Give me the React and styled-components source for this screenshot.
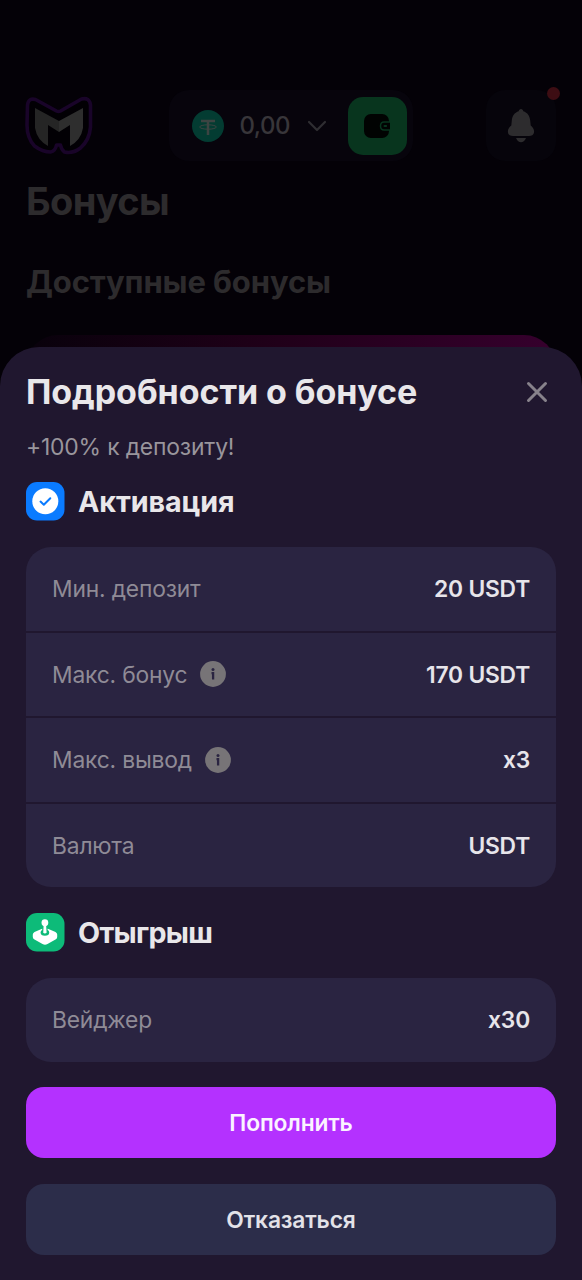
import React from 'react';
import styled, { createGlobalStyle } from 'styled-components';

const conditions = [
	{ label: 'Мин. депозит', value: '20 USDT' },
	{ label: 'Макс. бонус', value: '170 USDT', info: true },
	{ label: 'Макс. вывод', value: 'x3', info: true },
	{ label: 'Валюта', value: 'USDT' },
];

const wagering = [
	{ label: 'Вейджер', value: 'x30' },
];

const Logo = () => (
	<svg width="78" height="70" viewBox="0 0 78 70" fill="none">
		<path
			d="M7.500 14Q8.500 6.500 15.500 8.500L36.500 20Q38.500 21 40.500 20L61.500 8Q69.500 6 70.500 14L70.500 36Q69.500 49 60.500 57Q52.500 63 44.500 61Q41.500 59 40.500 54H36.500Q35.500 60 30.500 61Q22.500 61 14.500 55Q7 47 7 34Z"
			fill="#020004" stroke="#190429" strokeWidth="3.600" strokeLinejoin="round"
		/>
		<path d="M15 17L39 30V41L28 34V55Q17 49 15 37Z" fill="#252525" />
		<path d="M63 17L39 30V41L50 34V55Q61 49 63 37Z" fill="#2e2e2e" />
	</svg>
);

const Tether = () => (
	<svg width="32" height="32" viewBox="0 0 32 32" fill="none">
		<circle cx="16" cy="16" r="16" fill="#033c32" />
		<path d="M9 11H23M16 11V25" stroke="#3c4442" strokeWidth="2.500" />
		<ellipse cx="16" cy="17" rx="8.300" ry="2.200" stroke="#3c4442" strokeWidth="1" />
	</svg>
);

const Chevron = () => (
	<svg width="20" height="12" viewBox="0 0 20 12" fill="none">
		<path d="M2 2L10 10L18 2" stroke="#2f2e32" strokeWidth="2.200" strokeLinecap="round" strokeLinejoin="round" />
	</svg>
);

const Wallet = () => (
	<svg width="28" height="26" viewBox="0 0 28 26" fill="none">
		<rect x="1" y="1" width="25" height="24" rx="7" fill="#010302" />
		<path d="M27 9H21Q17.500 9 17.500 13T21 17H27Z" fill="#010302" />
		<path d="M27 9H21Q17.500 9 17.500 13T21 17H27" stroke="#08351e" strokeWidth="1.500" />
		<rect x="20.500" y="12" width="3.600" height="2" rx="1" fill="#08351e" />
	</svg>
);

const Bell = () => (
	<svg width="28" height="34" viewBox="0 0 28 34" fill="#2d2c2e">
		<path d="M14 0C15.300 0 16 1 16.300 2.200C20.500 3.600 22.900 7 23.200 11.500L23.700 16.500C26 18.500 27.500 20.500 27 23.500C26.700 26 24.500 27 22 27H6C3.500 27 1.300 26 1 23.500C.5 20.500 2 18.500 4.300 16.500L4.800 11.500C5.100 7 7.500 3.600 11.700 2.200C12 1 12.700 0 14 0Z" />
		<path d="M9 29H19Q17 33.300 14 33.300T9 29Z" />
	</svg>
);

const Cross = () => (
	<svg width="22" height="22" viewBox="0 0 22 22" fill="none">
		<path d="M2.500 2.500L19.500 19.500M19.500 2.500L2.500 19.500" stroke="#87828b" strokeWidth="3" strokeLinecap="round" />
	</svg>
);

const CheckBadge = () => (
	<svg width="39" height="39" viewBox="0 0 39 39" fill="none">
		<rect width="38.500" height="38.500" rx="11" fill="#0a7bff" />
		<circle cx="19.300" cy="19.300" r="13" fill="#fff" />
		<path d="M14.500 19.600L17.800 22.700L24.300 16.300" stroke="#0a7bff" strokeWidth="2" strokeLinecap="round" strokeLinejoin="round" />
	</svg>
);

const Joystick = () => (
	<svg width="39" height="39" viewBox="0 0 39 39" fill="none">
		<rect width="38.500" height="38.500" rx="11" fill="#0dbb79" />
		<path d="M8.500 19L15.500 16Q19 14.600 22.500 16L29.500 19Q31.200 20 31.200 21.500V24Q31.200 25.800 29.500 26.600L21.500 31Q19 32.300 16.500 31L8.500 26.600Q6.800 25.800 6.800 24V21.500Q6.800 20 8.500 19Z" fill="#fff" />
		<ellipse cx="18.900" cy="19.600" rx="4.300" ry="3.200" fill="#0dbb79" />
		<path d="M16.200 14H21.600V17H16.200Z" fill="#0dbb79" />
		<path d="M17.700 11H20.100L20.600 19.800Q18.900 21.200 17.200 19.800Z" fill="#fff" />
		<circle cx="18.900" cy="9.700" r="3.400" fill="#fff" />
	</svg>
);

const Info = () => (
	<svg width="26" height="26" viewBox="0 0 26 26" fill="none">
		<circle cx="13" cy="13" r="12.900" fill="#777477" />
		<circle cx="13" cy="8.500" r="1.500" fill="#2a2441" />
		<path d="M11.500 12.200H13.100V18.400" stroke="#2a2441" strokeWidth="2.300" />
	</svg>
);

const Details = ({ items }) => (
	<List>
		{items.map(item => (
			<Row key={item.label}>
				<Label>
					{item.label}
					{item.info && <Info />}
				</Label>
				<Value>{item.value}</Value>
			</Row>
		))}
	</List>
);

const App = () => {
	return (
		<Page>
			<GlobalStyle />
			<Backdrop>
				<TopBar>
					<Logo />
					<Balance>
						<Tether />
						<Amount>0,00</Amount>
						<Chevron />
						<WalletButton aria-label="Кошелёк"><Wallet /></WalletButton>
					</Balance>
					<BellButton aria-label="Уведомления">
						<Bell />
						<Dot />
					</BellButton>
				</TopBar>
				<PageTitle>Бонусы</PageTitle>
				<PageSubtitle>Доступные бонусы</PageSubtitle>
				<PromoCard />
			</Backdrop>

			<Sheet>
				<SheetHeader>
					<SheetTitle>Подробности о бонусе</SheetTitle>
					<CloseButton aria-label="Закрыть"><Cross /></CloseButton>
				</SheetHeader>
				<Lead>+100% к депозиту!</Lead>

				<SectionTitle><CheckBadge />Активация</SectionTitle>
				<Details items={conditions} />

				<SectionTitle $tight><Joystick />Отыгрыш</SectionTitle>
				<Details items={wagering} />

				<Actions>
					<Button $primary>Пополнить</Button>
					<Button>Отказаться</Button>
				</Actions>
			</Sheet>
		</Page>
	);
}

export default App;


const GlobalStyle = createGlobalStyle`
	* {
		box-sizing: border-box;
	}

	body {
		margin: 0;
		background: #040107;
		font-family: Inter, "Liberation Sans", sans-serif;
	}

	h1, h2, h3, p {
		margin: 0;
	}

	button {
		border: 0;
		padding: 0;
		background: none;
		font: inherit;
	}

	svg {
		display: block;
		flex: none;
	}
`

const Page = styled.div`
	display: flex;
	flex-direction: column;
	height: 1280px;
	overflow: hidden;
`

const Backdrop = styled.div`
	height: 375px;
	flex: none;
	padding: 90px 26px 0;
`

const TopBar = styled.header`
	display: flex;
	align-items: center;
	justify-content: space-between;
	height: 71px;
	margin-left: -6px;
`

const Balance = styled.div`
	display: flex;
	align-items: center;
	width: 244px;
	height: 71px;
	margin-left: -3px;
	padding: 0 6px 0 23px;
	border-radius: 20px;
	background: #07040c;
`

const Amount = styled.span`
	width: 66px;
	margin-left: 16px;
	margin-right: 1px;
	font-size: 24px;
	font-weight: 500;
	letter-spacing: -0.5px;
	color: #38363a;
`

const WalletButton = styled.button`
	display: flex;
	align-items: center;
	justify-content: center;
	width: 59px;
	height: 58px;
	margin-left: auto;
	border-radius: 15px;
	background: #08351e;
`

const BellButton = styled.button`
	position: relative;
	display: flex;
	align-items: center;
	justify-content: center;
	width: 70px;
	height: 71px;
	border-radius: 19px;
	background: #06040b;
`

const Dot = styled.span`
	position: absolute;
	top: -3px;
	right: -4px;
	width: 13px;
	height: 13px;
	border-radius: 50%;
	background: #3d0d13;
`

const PageTitle = styled.h1`
	margin-top: 16px;
	font-size: 38px;
	line-height: 48px;
	font-weight: 700;
	letter-spacing: -0.6px;
	color: #2d2b2d;
`

const PageSubtitle = styled.h2`
	margin-top: 37px;
	font-size: 31px;
	line-height: 40px;
	font-weight: 700;
	letter-spacing: -0.12px;
	color: #2d2b2d;
`

const PromoCard = styled.div`
	height: 40px;
	margin-top: 33px;
	border-radius: 32px 32px 0 0;
	background: linear-gradient(90deg, #08010b, #1f0018 45%, #36002d);
`

const Sheet = styled.section`
	position: relative;
	flex: 1;
	display: flex;
	flex-direction: column;
	margin-top: -28px;
	padding: 22px 26px 0;
	border-radius: 39px 39px 0 0;
	background: #20172f;
`

const SheetHeader = styled.div`
	display: flex;
	align-items: center;
	justify-content: space-between;
	height: 46px;
`

const SheetTitle = styled.h2`
	margin-top: -1px;
	font-size: 34px;
	font-weight: 700;
	letter-spacing: -0.07px;
	color: #e9e7ea;
`

const CloseButton = styled.button`
	margin-right: 8px;
`

const Lead = styled.p`
	margin-top: 16px;
	font-size: 22.9px;
	line-height: 32px;
	letter-spacing: -0.18px;
	color: #99959c;
`

const SectionTitle = styled.h3`
	display: flex;
	align-items: center;
	gap: 13px;
	height: 39px;
	margin-top: ${props => props.$tight ? '26px' : '19px'};
	font-size: 28.7px;
	font-weight: 700;
	letter-spacing: ${props => props.$tight ? '-0.7px' : '-0.1px'};
	color: #e9e7ea;
`

const List = styled.ul`
	display: flex;
	flex-direction: column;
	gap: 2px;
	margin: 26px 0 0;
	padding: 0;
	list-style: none;
	border-radius: 25px;
	overflow: hidden;
	flex: none;
`

const Row = styled.li`
	display: flex;
	align-items: center;
	justify-content: space-between;
	height: 83.5px;
	padding: 0 26px;
	background: #2a2441;
`

const Label = styled.span`
	display: flex;
	align-items: center;
	gap: 13px;
	font-size: 22.8px;
	letter-spacing: -0.17px;
	color: #8f8b96;
`

const Value = styled.span`
	font-size: 22.8px;
	font-weight: 600;
	letter-spacing: -0.2px;
	color: #e7e5ea;
`

const Actions = styled.div`
	display: flex;
	flex-direction: column;
	gap: 26px;
	margin-top: 25.9px;
`

const Button = styled.button`
	height: 70.7px;
	border-radius: 18px;
	font-size: 22.8px;
	font-weight: 600;
	letter-spacing: -0.15px;
	color: ${props => props.$primary ? '#fbf3ff' : '#e3e2e8'};
	background: ${props => props.$primary ? '#b431ff' : '#2c2d4a'};
`
